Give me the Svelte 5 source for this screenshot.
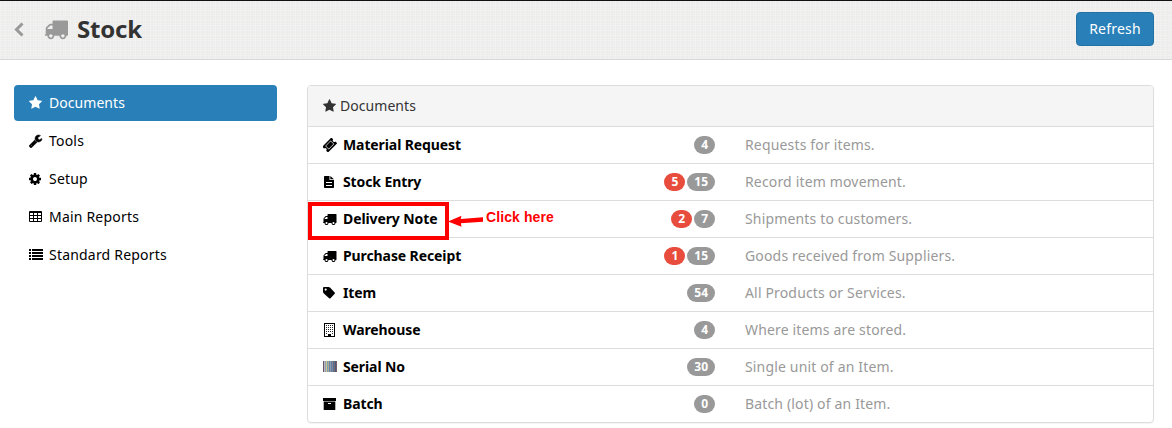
<script>
  const star = 'M1728 647q0 22-26 48l-363 354 86 500q1 7 1 20 0 21-10.5 35.5t-30.5 14.5q-19 0-40-12l-449-236-449 236q-22 12-40 12-21 0-31.5-14.5t-10.5-35.5q0-6 2-20l86-500-364-354q-25-27-25-48 0-37 56-46l502-73 225-455q19-41 49-41t49 41l225 455 502 73q56 9 56 46z';
  const truck = 'M640 1408q0-52-38-90t-90-38-90 38-38 90 38 90 90 38 90-38 38-90zm-384-512h384v-256h-158q-13 0-22 9l-195 195q-9 9-9 22v30zm1280 512q0-52-38-90t-90-38-90 38-38 90 38 90 90 38 90-38 38-90zm256-1088v1024q0 15-4 26.5t-13.5 18.5-16.5 11.5-23.5 6-22.5 2-25.5 0-22.5-.5q0 106-75 181t-181 75-181-75-75-181h-384q0 106-75 181t-181 75-181-75-75-181h-64q-3 0-22.5.5t-25.5 0-22.5-2-23.5-6-16.5-11.5-13.5-18.5-4-26.5q0-26 19-45t45-19v-320q0-8-.5-35t0-38 2.5-34.5 6.5-37 14-30.5 22.5-30l198-198q19-19 50.5-32t58.5-13h160v-192q0-26 19-45t45-19h1024q26 0 45 19t19 45z';
  const wrench = 'M448 1472q0-26-19-45t-45-19-45 19-19 45 19 45 45 19 45-19 19-45zm644-420l-682 682q-37 37-90 37-52 0-91-37l-106-108q-38-36-38-90 0-53 38-91l681-681q39 98 114.5 173.5t173.5 114.5zm634-435q0 39-23 106-47 134-164.5 217.5t-258.5 83.5q-185 0-316.5-131.5t-131.5-316.5 131.5-316.5 316.5-131.5q58 0 121.5 16.5t107.5 46.5q16 11 16 28t-16 28l-293 169v224l193 107q5-3 79-48.5t135.5-81 70.5-35.5q15 0 23.5 10t8.5 25z';
  const cog = 'M1152 896q0-106-75-181t-181-75-181 75-75 181 75 181 181 75 181-75 75-181zm512-109v222q0 12-8 23t-20 13l-185 28q-19 54-39 91 35 50 107 138 10 12 10 25t-9 23q-27 37-99 108t-94 71q-12 0-26-9l-138-108q-44 23-91 38-16 136-29 186-7 28-36 28h-222q-14 0-24.5-8.5t-11.5-21.5l-28-184q-49-16-90-37l-141 107q-10 9-25 9-14 0-25-11-126-114-165-168-7-10-7-23 0-12 8-23 15-21 51-66.5t54-70.5q-27-50-41-99l-183-27q-13-2-21-12.5t-8-23.5v-222q0-12 8-23t19-13l186-28q14-46 39-92-40-57-107-138-10-12-10-24 0-10 9-23 26-36 98.5-107.5t94.5-71.5q13 0 26 10l138 107q44-23 91-38 16-136 29-186 7-28 36-28h222q14 0 24.5 8.5t11.5 21.5l28 184q49 16 90 37l142-107q9-9 24-9 13 0 25 10 129 119 165 170 7 8 7 22 0 12-8 23-15 21-51 66.5t-54 70.5q26 50 41 98l183 28q13 2 21 12.5t8 23.5z';

  const nav = [
    ['star', 'Documents'],
    ['wrench', 'Tools'],
    ['cog', 'Setup'],
    ['table', 'Main Reports'],
    ['list', 'Standard Reports']
  ];
  const rows = [
    { icon: 'ticket', name: 'Material Request', count: 4, text: 'Requests for items.' },
    { icon: 'file', name: 'Stock Entry', open: 5, count: 15, text: 'Record item movement.' },
    { icon: 'truck', name: 'Delivery Note', open: 2, count: 7, text: 'Shipments to customers.', marked: true },
    { icon: 'truck', name: 'Purchase Receipt', open: 1, count: 15, text: 'Goods received from Suppliers.' },
    { icon: 'tag', name: 'Item', count: 54, text: 'All Products or Services.' },
    { icon: 'building', name: 'Warehouse', count: 4, text: 'Where items are stored.' },
    { icon: 'barcode', name: 'Serial No', count: 30, text: 'Single unit of an Item.' },
    { icon: 'archive', name: 'Batch', count: 0, text: 'Batch (lot) of an Item.' }
  ];
  const bars = ['#6a5560', '#b3b6cc', '#9aa0a8', '#cfc58a', '#75a3b8', '#b8a68d', '#6488ac', '#8d9aae', '#6280a8', '#8a8492', '#4f7296', '#80666e', '#465c80', '#75606a'];
</script>

{#snippet icon(name)}
  {#if name === 'star'}
    <svg class="icon" viewBox="64 0 1792 1792"><path d={star} /></svg>
  {:else if name === 'truck'}
    <svg class="icon" viewBox="64 0 1792 1792"><path d={truck} /></svg>
  {:else if name === 'wrench'}
    <svg class="icon bold" viewBox="64 0 1792 1792"><path d={wrench} /></svg>
  {:else if name === 'cog'}
    <svg class="icon" viewBox="128 0 1792 1792"><path d={cog} /></svg>
  {:else if name === 'table'}
    <svg class="icon" viewBox="0 0 14 14"><path fill-rule="evenodd" d="M1 1h11q1 0 1 1v9q0 1-1 1H1q-1 0-1-1V2q0-1 1-1zM1 3v2h3V3zM5 3v2h3V3zM9 3v2h3V3zM1 6v2h3V6zM5 6v2h3V6zM9 6v2h3V6zM1 9v2h3V9zM5 9v2h3V9zM9 9v2h3V9z" /></svg>
  {:else if name === 'list'}
    <svg class="icon" viewBox="0 0 14 14"><path d="M0 1h2v2H0zM3 1h11v2H3zM0 4h2v2H0zM3 4h11v2H3zM0 7h2v2H0zM3 7h11v2H3zM0 10h2v2H0zM3 10h11v2H3z" /></svg>
  {:else if name === 'ticket'}
    <svg class="icon" viewBox="0 0 14 14"><g transform="rotate(-45 6.700 7)"><path fill-rule="evenodd" d="M.2 2.900H13.200V5.500A1.500 1.500 0 0 0 13.200 8.500V11.100H.2V8.500A1.500 1.500 0 0 0 .2 5.500zM2.900 4.500v5h7.600v-5z" /><path d="M3.400 5h6.600v4h-6.600z" /></g></svg>
  {:else if name === 'file'}
    <svg class="icon" viewBox="0 0 14 14"><path fill-rule="evenodd" d="M2 1h4.500v4h4.500v7.300q0 .7-.7.700H1.700q-.7 0-.7-.7V1.700Q1 1 1.700 1zM3 7v1h6V7zM3 10v1h6v-1z" /><path d="M7.300 1L11 4.300H7.300z" /></svg>
  {:else if name === 'tag'}
    <svg class="icon" viewBox="0 0 14 14"><path fill-rule="evenodd" d="M1 1h4.500q.8 0 1.500.6l4.700 4.800q.6.700 0 1.400l-4.200 4.400q-.7.600-1.400 0L.6 7.300Q0 6.700 0 5.800V2q0-1 1-1zM2.700 2.500a1.100 1.100 0 1 0 0 2.200 1.100 1.100 0 0 0 0-2.200z" /></svg>
  {:else if name === 'building'}
    <svg class="icon" viewBox="0 0 14 14"><path fill-rule="evenodd" d="M1 0h11v14H1zM2 1v12h3v-2h3v2h3V1z" /><path class="windows" d="M3 2h1v1H3zM5 2h1v1H5zM7 2h1v1H7zM9 2h1v1H9zM3 4h1v1H3zM5 4h1v1H5zM7 4h1v1H7zM9 4h1v1H9zM3 6h1v1H3zM5 6h1v1H5zM7 6h1v1H7zM9 6h1v1H9zM3 8h1v1H3zM5 8h1v1H5zM7 8h1v1H7zM9 8h1v1H9zM3 10h1v1H3zM9 10h1v1H9z" /></svg>
  {:else if name === 'barcode'}
    <svg class="icon" viewBox="0 0 14 14">{#each bars as fill, i}<rect x={i} y="1" width="1" height="11" {fill} />{/each}</svg>
  {:else}
    <svg class="icon" viewBox="0 0 14 14"><path d="M0 1h13v3H0z" /><path fill-rule="evenodd" d="M.7 4.400h11.600V13H.7zM5 6v1h3V6z" /></svg>
  {/if}
{/snippet}

<div class="page">
  <header>
    <svg class="back" viewBox="0 0 10 15"><path d="M8.500 1.500L2.500 7.500l6 6" /></svg>
    <svg class="big-truck" viewBox="0 0 1792 1792"><path d={truck} /></svg>
    <h1>Stock</h1>
    <button>Refresh</button>
  </header>
  <div class="body">
    <nav>
      {#each nav as [glyph, label], i}
        <a class:active={i === 0}>{@render icon(glyph)}<span>{label}</span></a>
      {/each}
    </nav>
    <main>
      <div class="heading">{@render icon('star')}<span>Documents</span></div>
      {#each rows as row}
        <div class="row" class:marked={row.marked}>
          <div class="name">{@render icon(row.icon)}<b>{row.name}</b></div>
          <div class="badges">
            {#if row.open}<span class="badge open">{row.open}</span>{/if}
            <span class="badge">{row.count}</span>
          </div>
          <div class="text">{row.text}</div>
          {#if row.marked}
            <div class="frame"></div>
            <svg class="arrow" viewBox="0 0 36 14"><path d="M0 7.500L13.500 1.700 12.700 5.100 35 3.300V7.700L12.900 9.300 13.500 12.700z" /></svg>
            <div class="note">Click here</div>
          {/if}
        </div>
      {/each}
    </main>
  </div>
</div>

<style>
  :global(body) { margin: 0; background: #fff; }
  .page { height: 428px; overflow: hidden; font: 14px/20px "Noto Sans", sans-serif; color: #000; }
  header {
    box-sizing: border-box; height: 60px; padding: 0 18px 0 14px;
    display: flex; align-items: center;
    border-top: 1px solid #111; border-bottom: 1px solid #d8d8d8;
    background-color: #ececec;
    background-image:
      repeating-linear-gradient(90deg, rgba(255,255,255,.25) 0 1px, transparent 1px 3px, rgba(255,255,255,.15) 3px 4px, transparent 4px 5px),
      repeating-linear-gradient(0deg, rgba(244,241,232,.5) 0 1px, transparent 1px 3px, rgba(255,255,255,.25) 3px 4px, transparent 4px 5px);
  }
  .back { width: 10px; height: 15px; fill: none; stroke: #999; stroke-width: 3; position: relative; top: -1px; }
  .big-truck { width: 24px; height: 24px; margin-left: 20px; fill: #999; position: relative; top: -1px; }
  h1 { margin: -2px 0 0 9px; font-size: 24px; line-height: 30px; font-weight: bold; color: #333; letter-spacing: -.2px; }
  button {
    margin-left: auto; margin-top: -2px; box-sizing: border-box; width: 78px; height: 34px; padding: 0;
    border: 1px solid #2472a4; border-radius: 4px; background: #2980b9; color: #fff;
    font: inherit; letter-spacing: .2px;
  }
  .body { display: flex; gap: 30px; padding: 25px 18px 0 14px; }
  nav { width: 263px; display: flex; flex-direction: column; gap: 2px; }
  a { display: flex; align-items: center; gap: 6px; height: 36px; padding-left: 15px; border-radius: 4px; letter-spacing: .2px; }
  .active { background: #2980b9; color: #fff; letter-spacing: .05px; }
  .icon { display: block; flex: none; width: 14px; height: 14px; fill: currentColor; }
  .bold { stroke: currentColor; stroke-width: 60; }
  .windows { opacity: .85; }
  main {
    flex: 1; box-sizing: border-box; height: 338px; border: 1px solid #ddd; border-radius: 4px;
    box-shadow: 0 1px 1px rgba(0,0,0,.05);
  }
  .heading {
    display: flex; align-items: center; gap: 3px; height: 40px; padding-left: 15px;
    background: #f5f5f5; color: #333; border-radius: 3px 3px 0 0; letter-spacing: .05px;
  }
  .row { position: relative; display: flex; align-items: center; height: 36px; padding-left: 15px; border-top: 1px solid #ddd; }
  .marked { z-index: 1; }
  .name { display: flex; align-items: center; gap: 6px; width: 242px; letter-spacing: -.1px; }
  .badges { display: flex; justify-content: flex-end; gap: 2px; width: 150px; }
  .badge {
    box-sizing: border-box; height: 18px; padding: 3px 7px; border-radius: 10px;
    background: #999; color: #fff; font-size: 12px; line-height: 12px; font-weight: bold;
  }
  .open { background: #e74c3c; }
  .text { padding-left: 30px; color: #999; letter-spacing: .16px; }
  .frame { position: absolute; box-sizing: border-box; left: 0; top: 1px; width: 141px; height: 38px; border: 4px solid #f00; }
  .arrow { position: absolute; left: 140px; top: 13px; width: 36px; height: 14px; fill: #f00; }
  .note { position: absolute; left: 178px; top: 6px; color: #f00; font: bold 14px/20px "Liberation Sans", sans-serif; letter-spacing: .1px; }
</style>
